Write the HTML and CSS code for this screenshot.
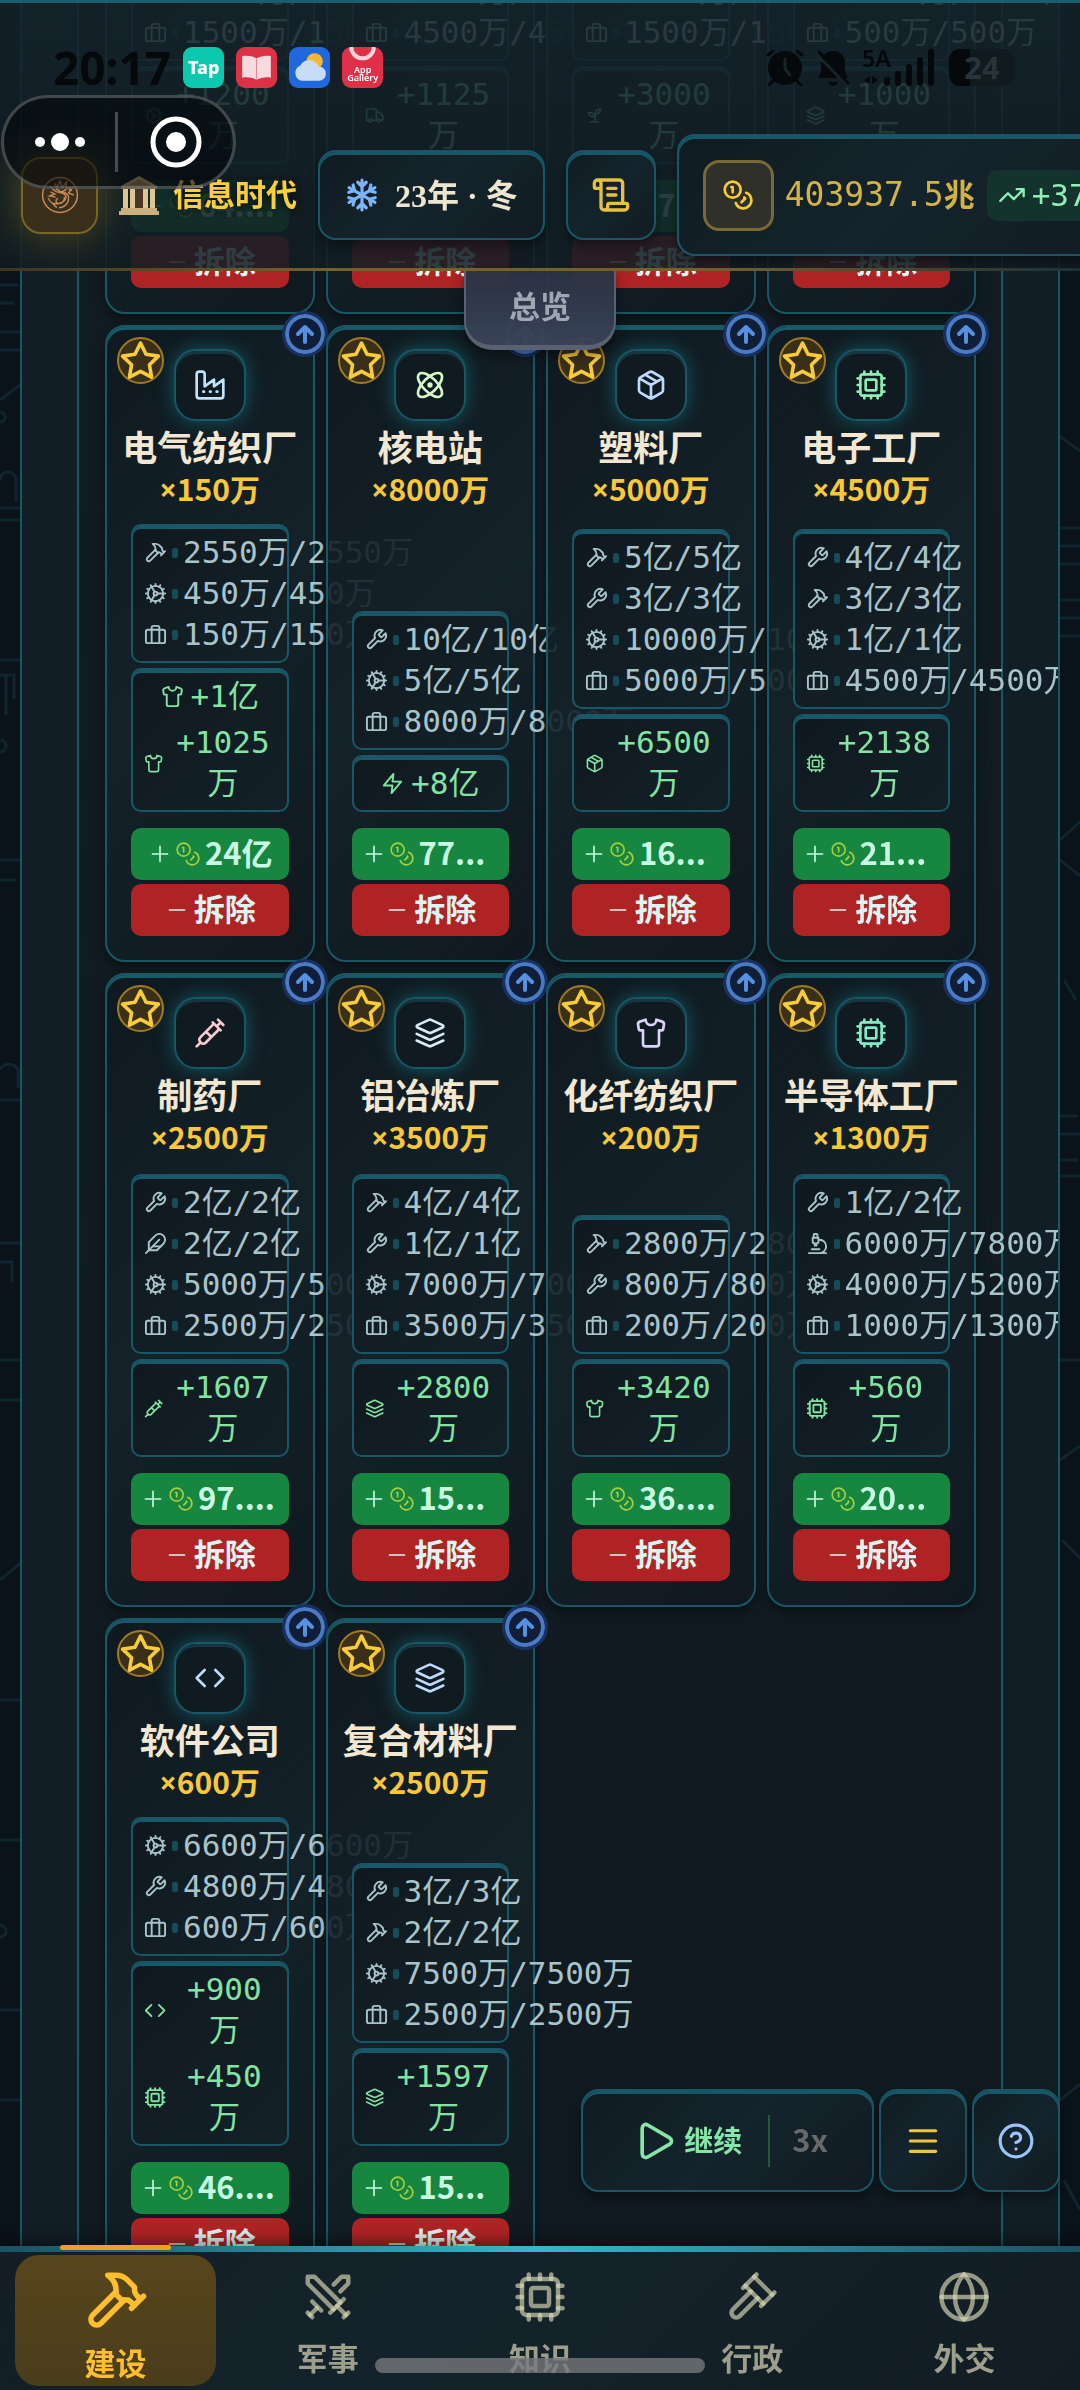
FILE: index.html
```
<!DOCTYPE html>
<html lang="zh-CN">
<head>
    <meta charset="UTF-8">
    <meta name="viewport" content="width=device-width, initial-scale=1.0">
    <title>建设</title>
    <link rel="stylesheet" href="styles.css">
</head>
<body>
    <!-- Icon sprite -->
    <svg class="sprite" aria-hidden="true">
        <symbol id="i-hammer" viewBox="0 0 24 24"><path d="m15 12-8.5 8.5a2.12 2.12 0 1 1-3-3L12 9"/><path d="M17.64 15 22 10.64"/><path d="m20.91 11.7-1.25-1.25c-.6-.6-.93-1.4-.93-2.25v-.86L16.01 4.6a5.56 5.56 0 0 0-3.94-1.64H9l.92.82A6.18 6.18 0 0 1 12 8.4v1.56l2 2h2.47l2.26 1.91"/></symbol>
        <symbol id="i-cog" viewBox="0 0 24 24"><circle cx="12" cy="12" r="8"/><circle cx="12" cy="12" r="2"/><path d="M12 2v2M12 22v-2M17 20.66l-1-1.73M11 10.27 7 3.34M20.66 17l-1.73-1M3.34 7l1.73 1M14 12h8M2 12h2M20.66 7l-1.73 1M3.34 17l1.73-1M17 3.34l-1 1.73M11 13.73l-4 6.93"/></symbol>
        <symbol id="i-case" viewBox="0 0 24 24"><rect x="2" y="7" width="20" height="14" rx="2"/><path d="M16 21V5a2 2 0 0 0-2-2h-4a2 2 0 0 0-2 2v16"/></symbol>
        <symbol id="i-wrench" viewBox="0 0 24 24"><path d="M14.7 6.3a1 1 0 0 0 0 1.4l1.6 1.6a1 1 0 0 0 1.4 0l3.77-3.77a6 6 0 0 1-7.94 7.94l-6.91 6.91a2.12 2.12 0 0 1-3-3l6.91-6.91a6 6 0 0 1 7.94-7.94l-3.76 3.76z"/></symbol>
        <symbol id="i-feather" viewBox="0 0 24 24"><path d="M20.24 12.24a6 6 0 0 0-8.49-8.49L5 10.5V19h8.5z"/><path d="M16 8 2 22M17.5 15H9"/></symbol>
        <symbol id="i-microscope" viewBox="0 0 24 24"><path d="M6 18h8M3 22h18M14 22a7 7 0 1 0 0-14h-1M9 14h2M9 12a2 2 0 0 1-2-2V6h6v4a2 2 0 0 1-2 2ZM12 6V3a1 1 0 0 0-1-1H9a1 1 0 0 0-1 1v3"/></symbol>
        <symbol id="i-shirt" viewBox="0 0 24 24"><path d="M20.38 3.46 16 2a4 4 0 0 1-8 0L3.62 3.46a2 2 0 0 0-1.34 2.23l.58 3.47a1 1 0 0 0 .99.84H6v10c0 1.1.9 2 2 2h8a2 2 0 0 0 2-2V10h2.15a1 1 0 0 0 .99-.84l.58-3.47a2 2 0 0 0-1.34-2.23z"/></symbol>
        <symbol id="i-zap" viewBox="0 0 24 24"><path d="M13 2 3 14h9l-1 8 10-12h-9z"/></symbol>
        <symbol id="i-package" viewBox="0 0 24 24"><path d="m7.5 4.27 9 5.15M21 8a2 2 0 0 0-1-1.73l-7-4a2 2 0 0 0-2 0l-7 4A2 2 0 0 0 3 8v8a2 2 0 0 0 1 1.73l7 4a2 2 0 0 0 2 0l7-4A2 2 0 0 0 21 16ZM3.3 7l8.7 5 8.7-5M12 22V12"/></symbol>
        <symbol id="i-cpu" viewBox="0 0 24 24"><rect x="4" y="4" width="16" height="16" rx="2"/><rect x="8" y="8" width="8" height="8" rx="1"/><path d="M12 20v2"/><path d="M12 2v2"/><path d="M17 20v2"/><path d="M17 2v2"/><path d="M2 12h2"/><path d="M2 17h2"/><path d="M2 7h2"/><path d="M20 12h2"/><path d="M20 17h2"/><path d="M20 7h2"/><path d="M7 20v2"/><path d="M7 2v2"/></symbol>
        <symbol id="i-factory" viewBox="0 0 24 24"><path d="M2 20a2 2 0 0 0 2 2h16a2 2 0 0 0 2-2V8l-7 5V8l-7 5V4a2 2 0 0 0-2-2H4a2 2 0 0 0-2 2ZM17 17h.5M12 17h.5M7 17h.5"/></symbol>
        <symbol id="i-atom" viewBox="0 0 24 24"><circle cx="12" cy="12" r="1"/><path d="M20.2 20.2c2.04-2.03.02-7.36-4.5-11.9-4.54-4.52-9.87-6.54-11.9-4.5-2.04 2.03-.02 7.36 4.5 11.9 4.54 4.52 9.87 6.54 11.9 4.5Z"/><path d="M15.7 15.7c4.52-4.54 6.54-9.87 4.5-11.9-2.03-2.04-7.36-.02-11.9 4.5-4.52 4.54-6.54 9.87-4.5 11.9 2.03 2.04 7.36.02 11.9-4.5Z"/></symbol>
        <symbol id="i-syringe" viewBox="0 0 24 24"><path d="m18 2 4 4M17 7l3-3M19 9 8.7 19.3c-1 1-2.5 1-3.4 0l-.6-.6c-1-1-1-2.5 0-3.4L15 5M9 11l4 4M5 19l-3 3M14 4l6 6"/></symbol>
        <symbol id="i-layers" viewBox="0 0 24 24"><path d="M12.83 2.18a2 2 0 0 0-1.66 0L2.6 6.08a1 1 0 0 0 0 1.83l8.58 3.91a2 2 0 0 0 1.66 0l8.58-3.9a1 1 0 0 0 0-1.83ZM22 17.65l-9.17 4.16a2 2 0 0 1-1.66 0L2 17.65M22 12.65l-9.17 4.16a2 2 0 0 1-1.66 0L2 12.65"/></symbol>
        <symbol id="i-code" viewBox="0 0 24 24"><path d="m16 18 6-6-6-6M8 6l-6 6 6 6"/></symbol>
        <symbol id="i-coins" viewBox="0 0 24 24"><circle cx="8" cy="8" r="6"/><path d="M18.09 10.37A6 6 0 1 1 10.34 18M7 6h1v4M16.71 13.88l.7.71-2.82 2.82"/></symbol>
        <symbol id="i-truck" viewBox="0 0 24 24"><path d="M14 18V6a2 2 0 0 0-2-2H4a2 2 0 0 0-2 2v11a1 1 0 0 0 1 1h2M15 18H9M19 18h2a1 1 0 0 0 1-1v-3.65a1 1 0 0 0-.22-.62l-3.48-4.35A1 1 0 0 0 17.52 8H14"/><circle cx="17" cy="18" r="2"/><circle cx="7" cy="18" r="2"/></symbol>
        <symbol id="i-sprout" viewBox="0 0 24 24"><path d="M7 20h10M10 20c5.5-2.5.8-6.4 3-10M9.5 9.4c1.1.8 1.8 2.2 2.3 3.7-2 .4-3.5.4-4.8-.3-1.2-.6-2.3-1.9-3-4.2 2.8-.5 4.4 0 5.5.8zM14.1 6a7 7 0 0 0-1.1 4c1.9-.1 3.3-.6 4.3-1.4 1-1 1.6-2.3 1.7-4.6-2.7.1-4 1-4.9 2z"/></symbol>
        <symbol id="i-swords" viewBox="0 0 24 24"><path d="M14.5 17.5 3 6V3h3l11.5 11.5"/><path d="m13 19 6-6"/><path d="m16 16 4 4"/><path d="m19 21 2-2"/><path d="M14.5 6.5 18 3h3v3l-3.5 3.5"/><path d="m5 14 4 4"/><path d="m7 17-3 3"/><path d="m3 19 2 2"/></symbol>
        <symbol id="i-gavel" viewBox="0 0 24 24"><path d="m14.5 12.5-8 8a2.12 2.12 0 1 1-3-3l8-8"/><path d="m16 16 6-6"/><path d="m8 8 6-6"/><path d="m9 7 8 8"/><path d="m21 11-8-8"/></symbol>
        <symbol id="i-globe" viewBox="0 0 24 24"><circle cx="12" cy="12" r="10"/><path d="M12 2a14.5 14.5 0 0 0 0 20 14.5 14.5 0 0 0 0-20"/><path d="M2 12h20"/></symbol>
        <symbol id="i-scroll" viewBox="0 0 24 24"><path d="M15 12h-5M15 8h-5M19 17V5a2 2 0 0 0-2-2H4M8 21h12a2 2 0 0 0 2-2v-1a1 1 0 0 0-1-1H11a1 1 0 0 0-1 1v1a2 2 0 1 1-4 0V5a2 2 0 1 0-4 0v2a1 1 0 0 0 1 1h3"/></symbol>
        <symbol id="i-trend" viewBox="0 0 24 24"><path d="m22 7-8.5 8.5-5-5L2 17M16 7h6v6"/></symbol>
        <symbol id="i-play" viewBox="0 0 24 24"><path d="M5 5a2 2 0 0 1 3-1.73l12 7a2 2 0 0 1 0 3.46l-12 7A2 2 0 0 1 5 19z"/></symbol>
        <symbol id="i-menu" viewBox="0 0 24 24"><path d="M4 5.5h16M4 12h16M4 18.5h16"/></symbol>
        <symbol id="i-help" viewBox="0 0 24 24"><circle cx="12" cy="12" r="10"/><path d="M9.09 9a3 3 0 0 1 5.83 1c0 2-3 3-3 3M12 17h.01"/></symbol>
        <symbol id="i-star" viewBox="0 0 24 24"><path d="m12 2 3.09 6.26L22 9.27l-5 4.87 1.18 6.88L12 17.77l-6.18 3.25L7 14.14 2 9.27l6.91-1.01z"/></symbol>
        <symbol id="i-up" viewBox="0 0 24 24"><path d="m5 12 7-7 7 7M12 20V5"/></symbol>
        <symbol id="i-plus" viewBox="0 0 24 24"><path d="M5 12h14M12 5v14"/></symbol>
        <symbol id="i-minus" viewBox="0 0 24 24"><path d="M5 12h14"/></symbol>
        <symbol id="i-snow" viewBox="0 0 32 32">
            <path d="M16 2v28M12 4l4 4 4-4M12 28l4-4 4 4"/>
            <path d="M16 2v28M12 4l4 4 4-4M12 28l4-4 4 4" transform="rotate(60 16 16)"/>
            <path d="M16 2v28M12 4l4 4 4-4M12 28l4-4 4 4" transform="rotate(120 16 16)"/>
        </symbol>
    </svg>

    <!-- Circuit board backdrop -->
    <svg class="backdrop" viewBox="0 0 1080 2390" preserveAspectRatio="none" aria-hidden="true">
        <path d="M0 285h18M0 303h14M0 332h60M0 350h40M0 400l24-18M0 412a5 5 0 1 0 .1 0M0 480a8 8 0 0 1 16 0v22M0 508h80M0 520h22M0 660h70M0 675h14v24M6 675v40M0 740a6 6 0 1 0 .1 0M0 860h20M0 880h16M0 1070a10 10 0 0 1 18 0v18M0 1100h70M0 1243h24M0 1262h12v20M0 1360h22M0 1400h60M0 1580l24-20M0 1700h24M0 1840h24M0 1925a6 6 0 1 0 .1 0M0 2010h20M0 2100h22"/>
        <path d="M1058 435l22 16M1060 528h20M1060 546h20M1060 564h20M1060 600h20M1060 618h20M1060 636h20M1060 840l22-20M1060 860l20 16M1064 980l12 20M1060 1116h18M1060 1134h20M1060 1160h18M1060 1176h20M1030 1360h50M1060 1460l20-14M1062 1540l18 18M1060 2100l20-16M1064 2180l16 30M1034 420v52h18M1034 1110v80"/>
    </svg>

    <header class="topbar">
        <button class="emblem" aria-label="文明">
            <svg viewBox="0 0 36 36">
                <circle cx="18" cy="18" r="16.500"/>
                <path d="M8 10c3 1 4 4 7 5s6 0 8 3-1 7-6 8-9-1-10-5M13 7l2 4 3-6 2 6 4-5v6l6-1-4 5 5 2M9 15l4 2-5 2 6 1M20 15c5 1 7 4 6 8s-5 7-9 7M16 21c-3 2-2 5 1 5s6-3 5-6M25 11l4 3M11 26l4 4M14 12l5 3 5-2"/>
            </svg>
        </button>
        <div class="era">
            <svg class="temple" viewBox="0 0 40 40">
                <path d="M20 1 2 11v3h36v-3z" fill="#cdb27c"/>
                <path d="m20 4 11 6.500H9z" fill="#a98a57"/>
                <rect x="12" y="14" width="16" height="20" fill="#4b352b"/>
                <path d="M4 14h5v20H4zM11 14h5v20h-5zM24 14h5v20h-5zM31 14h5v20h-5z" fill="#dcc793"/>
                <path d="M2 33h36v3H2zM0 36h40v4H0z" fill="#c9b07c"/>
            </svg>
            <span>信息时代</span>
        </div>
        <button class="panel-btn season"><svg class="icon"><use href="#i-snow"/></svg><span>23年 · 冬</span></button>
        <button class="panel-btn log" aria-label="日志"><svg class="icon"><use href="#i-scroll"/></svg></button>
        <div class="treasury">
            <div class="coin-box"><svg class="icon"><use href="#i-coins"/></svg></div>
            <span class="amount">403937.5<b>兆</b></span>
            <span class="rate"><svg class="icon"><use href="#i-trend"/></svg>+37</span>
        </div>
    </header>

    <button class="overview">总览</button>

    <main class="page">
        <section class="board">
            <div class="grid" id="buildings"></div>
        </section>
    </main>

    <div class="controls">
        <div class="speed">
            <button class="resume"><svg class="icon"><use href="#i-play"/></svg><span>继续</span></button>
            <button class="rate-3x">3x</button>
        </div>
        <button class="panel-btn menu" aria-label="菜单"><svg class="icon"><use href="#i-menu"/></svg></button>
        <button class="panel-btn help" aria-label="帮助"><svg class="icon"><use href="#i-help"/></svg></button>
    </div>

    <nav class="tabs">
        <button class="tab active"><svg class="icon"><use href="#i-hammer"/></svg><span>建设</span></button>
        <button class="tab"><svg class="icon"><use href="#i-swords"/></svg><span>军事</span></button>
        <button class="tab"><svg class="icon"><use href="#i-cpu"/></svg><span>知识</span></button>
        <button class="tab"><svg class="icon"><use href="#i-gavel"/></svg><span>行政</span></button>
        <button class="tab"><svg class="icon"><use href="#i-globe"/></svg><span>外交</span></button>
    </nav>
    <div class="home-bar"></div>

    <!-- Phone status bar -->
    <div class="status">
        <span class="clock">20:17</span>
        <span class="app app-tap">Tap</span>
        <span class="app app-book"><svg viewBox="0 0 40 40"><path d="M6 9c5-1 10 0 14 2 4-2 9-3 14-2v21c-5-1-10 0-14 2-4-2-9-3-14-2z" fill="#f6dadd"/><path d="M20 11v21" stroke="#d98a94" stroke-width="1"/></svg></span>
        <span class="app app-weather"><svg viewBox="0 0 40 40"><circle cx="25" cy="14" r="8" fill="#f7b731"/><path d="M12 33a8 8 0 0 1-1-15 10 10 0 0 1 18 1 7 7 0 0 1 0 14z" fill="#c9dcf5"/></svg></span>
        <span class="app app-store"><svg viewBox="0 0 40 14"><path d="M9 0a11 11 0 0 0 22 0" fill="none" stroke="#fbd5da" stroke-width="4"/></svg>App<br>Gallery</span>
        <svg class="alarm" viewBox="0 0 38 36"><circle cx="19" cy="18" r="17"/><path class="line" d="m2 5 5-4M36 5l-5-4M7 31l-4 4M31 31l4 4"/><path class="hand" d="M19 9v10l5 6"/></svg>
        <svg class="bell" viewBox="0 0 34 38"><path d="M17 2c7 0 12 5 12 12v9l3 6H2l3-6v-9C5 7 10 2 17 2zM12 33h10c-1 5-9 5-10 0z"/><path class="gap" d="m1 6 30 30"/><path class="line" d="m3 3 29 31"/></svg>
        <span class="signal"><b>5A</b><svg viewBox="0 0 72 37"><path d="M25 34v-3M36 34v-9M47 34V18M58 34V11M69 34V3" class="bar"/><path d="m2 31 6-4v8zM16 31l-6-4v8z"/></svg></span>
        <span class="battery">24</span>
    </div>

    <div class="capsule">
        <button class="more" aria-label="更多"><svg viewBox="0 0 50 52"><circle cx="5" cy="26" r="5"/><circle cx="25" cy="26" r="9"/><circle cx="45" cy="26" r="5"/></svg></button>
        <button class="close" aria-label="关闭"><svg viewBox="0 0 52 52"><circle cx="26" cy="26" r="23" class="ring"/><circle cx="26" cy="26" r="10"/></svg></button>
    </div>

    <script src="app.js"></script>
</body>
</html>
```
FILE: styles.css
```
* {
    box-sizing: border-box;
}

body {
    margin: 0;
    height: 100vh;
    overflow: hidden;
    background: #0a121a;
    color: #a9bfc6;
    font-family: "Noto Sans CJK SC", sans-serif;
    font-size: 31px;
}

button {
    margin: 0;
    padding: 0;
    border: none;
    background: none;
    color: inherit;
    font: inherit;
    cursor: pointer;
}

h3, p {
    margin: 0;
}

.sprite {
    position: absolute;
    width: 0;
    height: 0;
}

.icon {
    display: block;
    width: 22px;
    height: 22px;
    fill: none;
    stroke: currentColor;
    stroke-width: 2;
    stroke-linecap: round;
    stroke-linejoin: round;
}

.backdrop {
    position: fixed;
    top: 0;
    left: 0;
    width: 100%;
    height: 100%;
    fill: none;
    stroke: #10252e;
    stroke-width: 3;
}

/* Top bar */
.topbar {
    position: fixed;
    z-index: 10;
    top: 0;
    left: 0;
    right: 0;
    display: flex;
    align-items: center;
    gap: 21px;
    padding: 131px 0 15px 21px;
    overflow: hidden;
    border-top: 3px solid #1b5f6e;
    background: linear-gradient(180deg, rgba(20, 34, 41, 0.86), rgba(17, 29, 35, 0.86));
}

.topbar::after {
    content: "";
    position: absolute;
    left: 0;
    right: 0;
    bottom: 0;
    height: 3px;
    background: linear-gradient(90deg, #3c3520, #75602a 30%, #75602a 65%, #1c3135);
}

.topbar > * {
    flex: none;
}

.emblem {
    display: flex;
    align-items: center;
    justify-content: center;
    width: 77px;
    height: 77px;
    border: 2px solid #7a6524;
    border-radius: 20px;
    background: rgba(72, 54, 24, 0.75);
    box-shadow: 0 0 44px rgba(160, 125, 25, 0.5);
}

.emblem svg {
    width: 38px;
    height: 38px;
    fill: none;
    stroke: #c58a58;
    stroke-width: 1.4;
}

.era {
    display: flex;
    align-items: center;
    gap: 14px;
    color: #f9cf3c;
    font-weight: 700;
    font-size: 31px;
    line-height: 40px;
    text-shadow: 0 0 10px rgba(0, 0, 0, 0.8);
}

.era span, .season span, .resume span {
    padding-bottom: 4px;
}

.temple {
    width: 40px;
    height: 40px;
}

.panel-btn, .treasury, .speed {
    display: flex;
    align-items: center;
    justify-content: center;
    border: 2px solid #195766;
    border-radius: 18px;
    background: linear-gradient(135deg, #101b22, #14242c 50%, #111b22);
    box-shadow: inset 0 3px 0 #1a5766, 0 6px 12px rgba(0, 0, 0, 0.4);
}

.season {
    gap: 16px;
    height: 90px;
    padding: 0 25px;
    color: #ece6cf;
    font-family: "Liberation Serif", "Noto Sans CJK SC", serif;
    font-weight: 700;
    font-size: 32px;
}

.season .icon {
    width: 34px;
    height: 34px;
    color: #7db4f7;
    stroke-width: 3;
}

.log {
    width: 90px;
    height: 90px;
    color: #e5c041;
}

.log .icon {
    width: 40px;
    height: 40px;
}

.treasury {
    height: 122px;
    padding: 0 24px;
    border-right: none;
}

.coin-box {
    display: flex;
    align-items: center;
    justify-content: center;
    width: 71px;
    height: 71px;
    margin-right: 11px;
    border: 3px solid #776a35;
    border-radius: 16px;
    background: #2e3029;
    color: #f5cd33;
}

.coin-box .icon {
    width: 32px;
    height: 32px;
}

.amount {
    margin-right: 12px;
    color: #d3b343;
    font-family: "DejaVu Sans Mono", "Noto Sans CJK SC", monospace;
    font-size: 33px;
    line-height: 40px;
}

.amount b {
    font-size: 31px;
}

.rate {
    display: flex;
    align-items: center;
    gap: 6px;
    height: 51px;
    padding: 0 11px;
    border-radius: 10px;
    background: #15332d;
    color: #8fefb4;
    font-family: "DejaVu Sans Mono", monospace;
    font-size: 31px;
}

.rate .icon {
    width: 28px;
    height: 28px;
}

.overview {
    position: fixed;
    z-index: 9;
    top: 268px;
    left: 50%;
    width: 152px;
    height: 82px;
    margin-left: -76px;
    padding-bottom: 6px;
    border: 2px solid #596172;
    border-bottom-width: 5px;
    border-radius: 0 0 28px 28px;
    background: linear-gradient(180deg, rgba(42, 50, 66, 0.97), rgba(59, 67, 89, 0.97));
    color: #a0a6b2;
    font-weight: 700;
    box-shadow: 0 6px 12px rgba(0, 0, 0, 0.4);
}

/* Building board, scrolled so that its first row sits behind the top bar */
.page {
    position: relative;
    margin: -600px 20px 0;
    padding: 200px 55px 0;
    overflow: hidden;
    border: 2px solid #195766;
    background: rgba(19, 31, 38, 0.97);
}

.board {
    padding: 76px 25px 300px 26px;
    border: 2px solid #195766;
    background: linear-gradient(180deg, #111c22, #101a20);
}

.grid {
    display: grid;
    grid-template-columns: repeat(4, minmax(0, 1fr));
    gap: 11px;
}

.card {
    position: relative;
    display: flex;
    flex-direction: column;
    min-height: 634px;
    padding: 22px 24px 24px;
    border: 2px solid #195766;
    border-radius: 20px;
    background: linear-gradient(135deg, rgba(15, 25, 31, 0.9), rgba(20, 34, 42, 0.9) 50%, rgba(15, 25, 31, 0.92));
    box-shadow: inset 0 3px 0 #1a5967, 0 6px 10px rgba(0, 0, 0, 0.35);
}

.star, .upgrade {
    position: absolute;
    display: flex;
    align-items: center;
    justify-content: center;
    border-radius: 50%;
}

.star {
    top: 10px;
    left: 10px;
    width: 47px;
    height: 47px;
    border: 2px solid #a17b22;
    background: #3a3019;
    color: #f8cb38;
}

.star .icon {
    width: 44px;
    height: 44px;
}

.upgrade {
    top: -16px;
    right: -15px;
    width: 46px;
    height: 46px;
    border: 3px solid #183160;
    background: #101e38;
    box-shadow: inset 0 0 0 4px #4a7bc4;
    color: #5591e0;
}

.upgrade .icon {
    width: 24px;
    height: 24px;
    stroke-width: 4;
}

.emblem-box {
    display: flex;
    align-items: center;
    justify-content: center;
    align-self: center;
    width: 72px;
    height: 72px;
    border: 2px solid #195766;
    border-radius: 22px;
    background: #101a21;
    box-shadow: 0 0 18px rgba(20, 120, 135, 0.65), inset 0 3px 0 #16353f;
}

.emblem-box .icon {
    width: 32px;
    height: 32px;
}

.tone-sky { color: #bfe4fb; }
.tone-lime { color: #d3f8c6; }
.tone-blue { color: #bdd9fb; }
.tone-green { color: #8cecb4; }
.tone-mint { color: #7eebc6; }
.tone-rose { color: #f7c9d0; }
.tone-ice { color: #dbe9f7; }
.tone-violet { color: #d9d3fa; }

.card h3 {
    margin: 3px -24px 0;
    color: #f2e7d2;
    font-weight: 700;
    font-size: 35px;
    line-height: 44px;
    text-align: center;
    white-space: nowrap;
}

.count {
    margin-bottom: 14px;
    color: #f8c838;
    font-weight: 700;
    font-size: 30px;
    line-height: 40px;
    text-align: center;
}

.count span {
    font-family: "Noto Sans", sans-serif;
}

.needs, .yields {
    border: 2px solid #195766;
    border-radius: 10px;
    background: linear-gradient(135deg, rgba(15, 24, 30, 0.92), rgba(20, 33, 41, 0.92));
    box-shadow: inset 0 3px 0 #1a5967;
    font-family: "DejaVu Sans Mono", "Noto Sans CJK SC", monospace;
    font-size: 31px;
    line-height: 41px;
}

.needs {
    margin-top: auto;
    padding: 6px 11px;
    color: #a9c3ca;
}

.needs p {
    display: flex;
    align-items: center;
    gap: 5px;
    height: 41px;
    white-space: nowrap;
}

.needs .icon {
    flex: none;
    width: 23px;
    height: 23px;
}

.dot {
    flex: none;
    width: 6px;
    height: 10px;
    border-radius: 2px;
    background: #174b58;
}

.yields {
    display: flex;
    flex-direction: column;
    gap: 5px;
    margin: 5px 0 16px;
    padding: 6px 11px;
    color: #83e3a2;
    text-align: center;
}

.yields p {
    display: flex;
    align-items: center;
    justify-content: center;
    gap: 7px;
}

.yields .icon {
    min-width: 0;
    width: 23px;
    height: 23px;
}

.act {
    display: flex;
    align-items: center;
    justify-content: center;
    height: 52px;
    margin-bottom: 4px;
    padding: 0 9px;
    border-radius: 10px;
    font-weight: 700;
    font-size: 31px;
    color: #dcf5f3;
}

.act:last-child {
    margin-bottom: 0;
}

.act .icon {
    flex: none;
    width: 26px;
    height: 26px;
    stroke-width: 1.5;
}

.act .icon + .icon {
    margin-left: 2px;
    color: #a8cf3d;
}

.act span {
    margin-left: 4px;
    padding-bottom: 5px;
    text-align: left;
    white-space: nowrap;
}

.act .cut {
    flex: 1;
}

.build {
    background: #168641;
    color: #c9fbe4;
}

.demolish {
    background: #b02324;
}

/* Floating controls */
.controls {
    position: fixed;
    z-index: 8;
    right: 20px;
    bottom: 198px;
    display: flex;
    gap: 5px;
}

.controls .panel-btn {
    width: 88px;
    height: 103px;
}

.speed {
    height: 103px;
    padding: 0 44px 0 50px;
}

.resume {
    display: flex;
    align-items: center;
    gap: 7px;
    height: 52px;
    padding-right: 26px;
    border-right: 2px solid #22573d;
    color: #86e6a8;
    font-weight: 700;
    font-size: 29px;
}

.resume .icon {
    width: 44px;
    height: 44px;
}

.rate-3x {
    padding: 0 0 5px 22px;
    color: #67696a;
    font-weight: 700;
}

.menu {
    color: #efc63d;
}

.help {
    color: #9cc3f7;
}

.controls .panel-btn .icon {
    width: 38px;
    height: 38px;
}

/* Bottom tabs */
.tabs {
    position: fixed;
    z-index: 10;
    left: 0;
    right: 0;
    bottom: 0;
    display: flex;
    gap: 11px;
    height: 144px;
    padding: 3px 15px 4px;
    border-top: 6px solid transparent;
    background:
        linear-gradient(135deg, #131e25, #14232b 40%, #121c23) padding-box,
        linear-gradient(90deg, #1b5261, #38b5cf 50%, #1b5261) border-box;
    box-shadow: 0 -6px 14px rgba(0, 0, 0, 0.4);
}

.tab {
    position: relative;
    display: flex;
    flex: 1;
    flex-direction: column;
    align-items: center;
    justify-content: flex-end;
    gap: 10px;
    padding-bottom: 6px;
    border-radius: 24px;
    color: #9d9e8c;
    font-weight: 700;
    font-size: 31px;
    line-height: 46px;
}

.tab .icon {
    width: 54px;
    height: 54px;
    stroke: rgba(220, 219, 185, 0.65);
}

.tab.active {
    gap: 6px;
    padding-bottom: 1px;
    background: linear-gradient(180deg, #57451c, #4a3d1c);
    color: #fdbf2b;
}

.tab.active::before {
    content: "";
    position: absolute;
    top: -10px;
    left: 45px;
    right: 45px;
    height: 5px;
    border-radius: 3px;
    background: #eba21a;
}

.tab.active .icon {
    width: 66px;
    height: 66px;
    stroke: currentColor;
}

.home-bar {
    position: fixed;
    z-index: 11;
    left: 50%;
    bottom: 17px;
    width: 330px;
    height: 15px;
    margin-left: -165px;
    border-radius: 8px;
    background: rgba(118, 120, 124, 0.8);
}

/* Phone chrome */
.status {
    position: fixed;
    z-index: 12;
    top: 46px;
    left: 0;
    right: 0;
    display: flex;
    align-items: center;
    gap: 12px;
    height: 43px;
    padding: 0 59px 0 53px;
    fill: #05090b;
    color: #05090b;
}

.clock {
    font-family: "Noto Sans", sans-serif;
    font-weight: 700;
    font-size: 46px;
    line-height: 43px;
}

.app {
    width: 41px;
    height: 41px;
    border-radius: 9px;
    overflow: hidden;
    color: #ffffff;
    text-align: center;
}

.app svg {
    display: block;
    width: 100%;
}

.app-tap {
    background: #0cc8ae;
    font-family: "Noto Sans", sans-serif;
    font-weight: 800;
    font-size: 18px;
    line-height: 40px;
}

.app-book {
    background: #dd3145;
}

.app-weather {
    background: #1f68dd;
}

.app-store {
    background: #e03049;
    font-family: "Noto Sans", sans-serif;
    font-weight: 600;
    font-size: 9px;
    line-height: 8px;
}

.app-store svg {
    margin-bottom: 5px;
}

.alarm {
    width: 38px;
    height: 36px;
    margin-left: auto;
}

.bell {
    width: 34px;
    height: 38px;
}

.line, .hand, .gap, .bar {
    fill: none;
    stroke: #05090b;
    stroke-width: 3;
    stroke-linecap: round;
}

.hand {
    stroke: #18242a;
}

.gap {
    stroke: #15252b;
}

.bar {
    stroke-width: 6;
}

.signal {
    position: relative;
    width: 72px;
    height: 37px;
}

.signal svg {
    display: block;
}

.signal b {
    position: absolute;
    top: 0;
    left: 0;
    font-family: "Noto Sans", sans-serif;
    font-weight: 600;
    font-size: 23px;
    line-height: 18px;
}

.battery {
    width: 66px;
    height: 37px;
    margin: 0 6px 0 3px;
    border-radius: 11px;
    background: linear-gradient(90deg, #05090b 32%, #111a1e 32%);
    color: #27353b;
    font-family: "Noto Sans", sans-serif;
    font-weight: 700;
    font-size: 31px;
    line-height: 36px;
    text-align: center;
}

.capsule {
    position: fixed;
    z-index: 12;
    top: 95px;
    left: 1px;
    display: flex;
    align-items: center;
    width: 235px;
    height: 94px;
    border: 3px solid rgba(150, 155, 158, 0.4);
    border-radius: 47px;
    background: rgba(4, 8, 11, 0.6);
    fill: #ffffff;
}

.capsule button {
    display: flex;
    align-items: center;
    justify-content: center;
    height: 60px;
}

.more {
    width: 111px;
}

.close {
    flex: 1;
    border-left: 3px solid #464b4e;
}

.capsule svg {
    width: 52px;
    height: 52px;
}

.ring {
    fill: none;
    stroke: #ffffff;
    stroke-width: 5;
}
```
FILE: app.js
```
// needs: [icon, text], yields: [icon, text]; buildings without a name are scrolled off the top
const buildings = [
    { needs: [['wrench', '3000万/3000万'], ['case', '1500万/1500万']], yields: [['cog', '+1200万']], cost: '64....' },
    { needs: [['wrench', '9000万/9000万'], ['case', '4500万/4500万']], yields: [['truck', '+1125万']], cost: '15...' },
    { needs: [['wrench', '3000万/3000万'], ['case', '1500万/1500万']], yields: [['sprout', '+3000万']], cost: '17...' },
    { needs: [['wrench', '1000万/1000万'], ['case', '500万/500万']], yields: [['layers', '+1000万']], cost: '77...' },

    { name: '电气纺织厂', icon: 'factory', tone: 'sky', count: '150万',
      needs: [['hammer', '2550万/2550万'], ['cog', '450万/450万'], ['case', '150万/150万']],
      yields: [['shirt', '+1亿'], ['shirt', '+1025万']], cost: '24亿' },
    { name: '核电站', icon: 'atom', tone: 'lime', count: '8000万',
      needs: [['wrench', '10亿/10亿'], ['cog', '5亿/5亿'], ['case', '8000万/8000万']],
      yields: [['zap', '+8亿']], cost: '77...' },
    { name: '塑料厂', icon: 'package', tone: 'blue', count: '5000万',
      needs: [['hammer', '5亿/5亿'], ['wrench', '3亿/3亿'], ['cog', '10000万/10000万'], ['case', '5000万/5000万']],
      yields: [['package', '+6500万']], cost: '16...' },
    { name: '电子工厂', icon: 'cpu', tone: 'green', count: '4500万',
      needs: [['wrench', '4亿/4亿'], ['hammer', '3亿/3亿'], ['cog', '1亿/1亿'], ['case', '4500万/4500万']],
      yields: [['cpu', '+2138万']], cost: '21...' },

    { name: '制药厂', icon: 'syringe', tone: 'rose', count: '2500万',
      needs: [['wrench', '2亿/2亿'], ['feather', '2亿/2亿'], ['cog', '5000万/5000万'], ['case', '2500万/2500万']],
      yields: [['syringe', '+1607万']], cost: '97....' },
    { name: '铝冶炼厂', icon: 'layers', tone: 'ice', count: '3500万',
      needs: [['hammer', '4亿/4亿'], ['wrench', '1亿/1亿'], ['cog', '7000万/7000万'], ['case', '3500万/3500万']],
      yields: [['layers', '+2800万']], cost: '15...' },
    { name: '化纤纺织厂', icon: 'shirt', tone: 'violet', count: '200万',
      needs: [['hammer', '2800万/2800万'], ['wrench', '800万/800万'], ['case', '200万/200万']],
      yields: [['shirt', '+3420万']], cost: '36....' },
    { name: '半导体工厂', icon: 'cpu', tone: 'mint', count: '1300万',
      needs: [['wrench', '1亿/2亿'], ['microscope', '6000万/7800万'], ['cog', '4000万/5200万'], ['case', '1000万/1300万']],
      yields: [['cpu', '+560万']], cost: '20...' },

    { name: '软件公司', icon: 'code', tone: 'blue', count: '600万',
      needs: [['cog', '6600万/6600万'], ['wrench', '4800万/4800万'], ['case', '600万/600万']],
      yields: [['code', '+900万'], ['cpu', '+450万']], cost: '46....' },
    { name: '复合材料厂', icon: 'layers', tone: 'blue', count: '2500万',
      needs: [['wrench', '3亿/3亿'], ['hammer', '2亿/2亿'], ['cog', '7500万/7500万'], ['case', '2500万/2500万']],
      yields: [['layers', '+1597万']], cost: '15...' }
];

const icon = name => `<svg class="icon" aria-hidden="true"><use href="#i-${name}"/></svg>`;

function renderCard(b) {
    const head = b.name ? `
        <button class="star" aria-label="收藏">${icon('star')}</button>
        <button class="upgrade" aria-label="升级">${icon('up')}</button>
        <div class="emblem-box tone-${b.tone}">${icon(b.icon)}</div>
        <h3>${b.name}</h3>
        <p class="count"><span>×</span>${b.count}</p>` : '';
    return `<article class="card">${head}
        <div class="needs">${b.needs.map(n => `<p>${icon(n[0])}<i class="dot"></i>${n[1]}</p>`).join('')}</div>
        <div class="yields">${b.yields.map(y => `<p>${icon(y[0])}<span>${y[1]}</span></p>`).join('')}</div>
        <button class="act build">${icon('plus')}${icon('coins')}<span class="${b.cost.includes('.') ? 'cut' : ''}">${b.cost}</span></button>
        <button class="act demolish">${icon('minus')}<span>拆除</span></button>
    </article>`;
}

document.getElementById('buildings').innerHTML = buildings.map(renderCard).join('');
```
